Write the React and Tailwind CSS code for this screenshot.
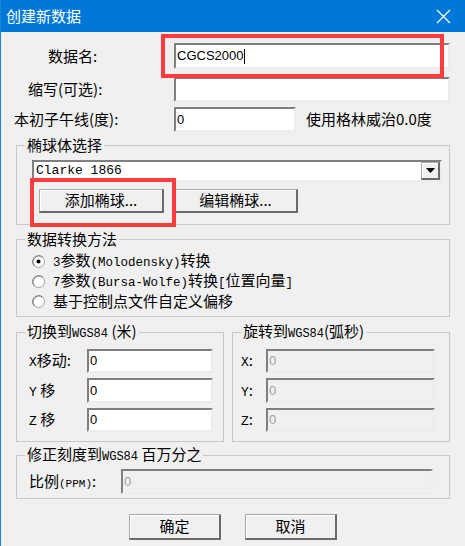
import React from 'react';

const cjk = "font-['Noto_Sans_CJK_SC',sans-serif]";
const mono = "font-['Liberation_Mono','Noto_Sans_CJK_SC',monospace]";
const sunken = 'border-2 border-t-[#7f7f7f] border-l-[#7f7f7f] border-r-[#ececec] border-b-[#ececec]';
const raised = 'border-t border-l border-t-[#a9a9a9] border-l-[#a9a9a9] border-b-2 border-r-2 border-b-[#6a6a6a] border-r-[#6a6a6a] bg-[#f0f0f0] shadow-[inset_1px_1px_0_#ffffff]';

function TextBox({ value = '', className = '', disabled = false, caret = false }) {
  return (
    <div className={`${sunken} ${disabled ? 'bg-[#f0f0f0] text-[#a0a0a0]' : 'bg-white text-black'} flex items-center pl-[1px] text-[13px] font-['Liberation_Sans',sans-serif] ${className}`}>
      <span>{value}</span>
      {caret && <span className="ml-[1px] w-[1px] h-[15px] bg-black" />}
    </div>
  );
}

function Button({ children, className = '' }) {
  return (
    <div className={`${raised} flex items-center justify-center text-[15px] text-black ${cjk} ${className}`}>
      {children}
    </div>
  );
}

function Group({ title, className = '', children }) {
  return (
    <fieldset className={`border border-[#c8c8c8] ${className}`}>
      <legend className={`ml-[8px] px-[2px] text-[15px] leading-[20px] text-black ${cjk}`}>{title}</legend>
      {children}
    </fieldset>
  );
}

function Radio({ checked, children }) {
  return (
    <div className="flex items-center h-[20px] pl-[15px]">
      <svg width="13" height="13" viewBox="0 0 13 13" className="shrink-0">
        <circle cx="6.5" cy="6.5" r="6" fill="#ffffff" stroke="#a0a0a0" />
        <path d="M2.3 10.7 A6 6 0 0 1 10.7 2.3" fill="none" stroke="#6e6e6e" />
        {checked && <circle cx="6.5" cy="6.5" r="2" fill="#000" />}
      </svg>
      <span className={`ml-[8px] text-[15px] text-black ${cjk}`}>{children}</span>
    </div>
  );
}

function M({ children, size = 'text-[12.5px]' }) {
  return <span className={`${mono} ${size}`}>{children}</span>;
}

export default function App() {
  return (
    <div className={`w-[465px] h-[546px] bg-[#f0f0f0] border-l border-[#1883d7] relative overflow-hidden ${cjk}`}>
      {/* title bar */}
      <div className="h-[32px] bg-[#0078d7] flex items-center justify-between pl-[6px] pr-[14px] -ml-[1px]">
        <span className="text-white text-[15px]">创建新数据</span>
        <svg width="15" height="15" viewBox="0 0 15 15">
          <path d="M1 1 L14 14 M14 1 L1 14" stroke="#ffffff" strokeWidth="1.2" />
        </svg>
      </div>

      <div className="flex flex-col">
        <div className="flex items-center mt-[11px] h-[26px] text-[15px]">
          <div className="w-[173px] pl-[47px]">数据名:</div>
          <TextBox value="CGCS2000" caret className="w-[276px] h-[26px]" />
        </div>
        <div className="flex items-center mt-[8px] h-[25px] text-[15px]">
          <div className="w-[173px] pl-[27px]">缩写(可选):</div>
          <TextBox className="w-[276px] h-[25px]" />
        </div>
        <div className="flex items-center mt-[5px] h-[25px] text-[15px]">
          <div className="w-[173px] pl-[13px]">本初子午线(度):</div>
          <TextBox value="0" className="w-[122px] h-[25px]" />
          <div className="ml-[10px]">使用格林威治0.0度</div>
        </div>

        <Group title="椭球体选择" className="mx-[15px] mt-[3px] pb-[11px]">
          <div className={`${sunken} bg-white ml-[15px] w-[410px] h-[22px] mt-[5px] flex items-center justify-between`}>
            <span className={`${mono} text-[13px] pl-[2px]`}>Clarke 1866</span>
            <div className={`${raised} w-[19px] h-[18px] flex items-center justify-center`}>
              <svg width="9" height="5" viewBox="0 0 9 5"><path d="M0 0 H9 L4.5 5 Z" fill="#000" /></svg>
            </div>
          </div>
          <div className="flex mt-[7px] ml-[22px] gap-[10px]">
            <Button className="w-[125px] h-[24px]">添加椭球...</Button>
            <Button className="w-[124px] h-[24px]">编辑椭球...</Button>
          </div>
        </Group>

        <Group title="数据转换方法" className="mx-[15px] mt-[4px] pb-[5px]">
          <div className="mt-[2px]">
            <Radio checked><M>3</M>参数<M>(Molodensky)</M>转换</Radio>
            <Radio><M>7</M>参数<M>(Bursa-Wolfe)</M>转换<M>[</M>位置向量<M>]</M></Radio>
            <Radio>基于控制点文件自定义偏移</Radio>
          </div>
        </Group>

        <div className="flex mx-[15px] mt-[4px] gap-[8px]">
          <Group title={<>切换到<M size="text-[12px]">WGS84</M> (米)</>} className="w-[208px] pb-[9px]">
            <div className="flex flex-col gap-[5px] mt-[5px] text-[15px]">
              <div className="flex items-center h-[24px]">
                <div className="w-[70px] pl-[12px]"><M size="text-[13px]">X</M>移动:</div>
                <TextBox value="0" className="w-[126px] h-[24px]" />
              </div>
              <div className="flex items-center h-[25px]">
                <div className="w-[70px] pl-[12px]"><M size="text-[13px]">Y</M> 移</div>
                <TextBox value="0" className="w-[126px] h-[25px]" />
              </div>
              <div className="flex items-center h-[24px]">
                <div className="w-[70px] pl-[12px]"><M size="text-[13px]">Z</M> 移</div>
                <TextBox value="0" className="w-[126px] h-[24px]" />
              </div>
            </div>
          </Group>
          <Group title={<>旋转到<M size="text-[12px]">WGS84</M>(弧秒)</>} className="flex-1 pb-[9px]">
            <div className="flex flex-col gap-[5px] mt-[5px] text-[15px]">
              {['X', 'Y', 'Z'].map((k, i) => (
                <div key={k} className={`flex items-center ${i === 1 ? 'h-[25px]' : 'h-[24px]'}`}>
                  <div className="w-[33px] pl-[8px]"><M size="text-[13px]">{k}</M>:</div>
                  <TextBox value="0" disabled className={`w-[169px] ${i === 1 ? 'h-[25px]' : 'h-[24px]'}`} />
                </div>
              ))}
            </div>
          </Group>
        </div>

        <Group title={<>修正刻度到<M size="text-[12px]">WGS84</M> 百万分之</>} className="mx-[15px] mt-[2px] pb-[4px]">
          <div className="flex items-center mt-[2px] h-[25px] text-[15px]">
            <div className="w-[104px] pl-[12px]">比例<M size="text-[11px]">(PPM)</M>:</div>
            <TextBox value="0" disabled className="w-[312px] h-[25px]" />
          </div>
        </Group>

        <div className="flex justify-center gap-[24px] mt-[15px]">
          <Button className="w-[92px] h-[26px]">确定</Button>
          <Button className="w-[92px] h-[26px]">取消</Button>
        </div>
      </div>

      {/* red highlight boxes */}
      <div className="absolute left-[160px] top-[34px] w-[283px] h-[44px] border-[4px] border-[#ff3b3b] pointer-events-none" />
      <div className="absolute left-[29px] top-[178px] w-[146px] h-[49px] border-[4px] border-[#ff3b3b] pointer-events-none" />
    </div>
  );
}
